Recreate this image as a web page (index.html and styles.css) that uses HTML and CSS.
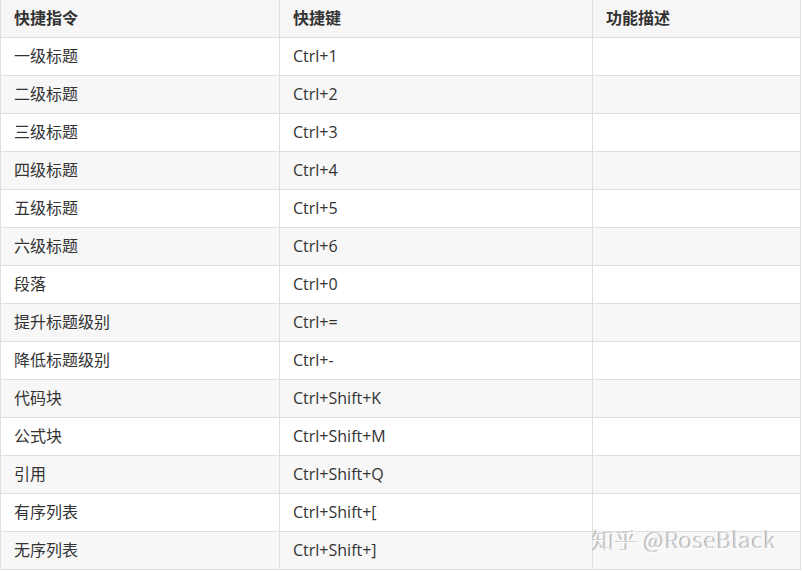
FILE: index.html
```html
<!DOCTYPE html>
<html lang="zh-CN">
<head>
<meta charset="utf-8">
<link rel="stylesheet" href="styles.css">
</head>
<body>
<div class="wrap">
<table class="kb">
<colgroup><col class="c1"><col class="c2"><col class="c3"></colgroup>
<thead>
<tr><th>快捷指令</th><th>快捷键</th><th>功能描述</th></tr>
</thead>
<tbody>
<tr><td>一级标题</td><td>Ctrl+1</td><td></td></tr>
<tr><td>二级标题</td><td>Ctrl+2</td><td></td></tr>
<tr><td>三级标题</td><td>Ctrl+3</td><td></td></tr>
<tr><td>四级标题</td><td>Ctrl+4</td><td></td></tr>
<tr><td>五级标题</td><td>Ctrl+5</td><td></td></tr>
<tr><td>六级标题</td><td>Ctrl+6</td><td></td></tr>
<tr><td>段落</td><td>Ctrl+0</td><td></td></tr>
<tr><td>提升标题级别</td><td>Ctrl+=</td><td></td></tr>
<tr><td>降低标题级别</td><td>Ctrl+-</td><td></td></tr>
<tr><td>代码块</td><td>Ctrl+Shift+K</td><td></td></tr>
<tr><td>公式块</td><td>Ctrl+Shift+M</td><td></td></tr>
<tr><td>引用</td><td>Ctrl+Shift+Q</td><td></td></tr>
<tr><td>有序列表</td><td>Ctrl+Shift+[</td><td></td></tr>
<tr><td>无序列表</td><td>Ctrl+Shift+]</td><td></td></tr>
</tbody>
</table>
<div class="mark">知乎 @RoseBlack</div>
</div>
</body>
</html>
```
FILE: styles.css
```css
html, body {
  margin: 0;
  padding: 0;
  background: #fff;
}
.wrap {
  position: relative;
  width: 802px;
  height: 571px;
  overflow: hidden;
}
.kb {
  border-collapse: collapse;
  table-layout: fixed;
  width: 800px;
  font-family: "Open Sans", "Noto Sans CJK SC", sans-serif;
  font-size: 16px;
  color: #333;
}
.c1 { width: 279px; }
.c2 { width: 313px; }
.c3 { width: 208px; }
.kb th, .kb td {
  border: 1px solid #dfdfdf;
  padding: 8px 13px;
  line-height: 21px;
  text-align: left;
  white-space: nowrap;
}
.kb tr:first-child th { border-top: 0; }
.kb th {
  font-weight: bold;
  background: #f6f6f6;
}
.kb tbody tr:nth-child(even) {
  background: #f7f7f7;
}
.kb tbody tr:nth-child(odd) {
  background: #fff;
}
.mark {
  position: absolute;
  left: 592px;
  top: 522px;
  font-family: "Noto Sans CJK SC", "Noto Sans", sans-serif;
  font-size: 22px;
  font-weight: 300;
  letter-spacing: 1px;
  color: #d4d4d4;
  text-shadow: 1px 1px 0 #fff, -1px 0 0 #aaa;
  white-space: nowrap;
}
```
